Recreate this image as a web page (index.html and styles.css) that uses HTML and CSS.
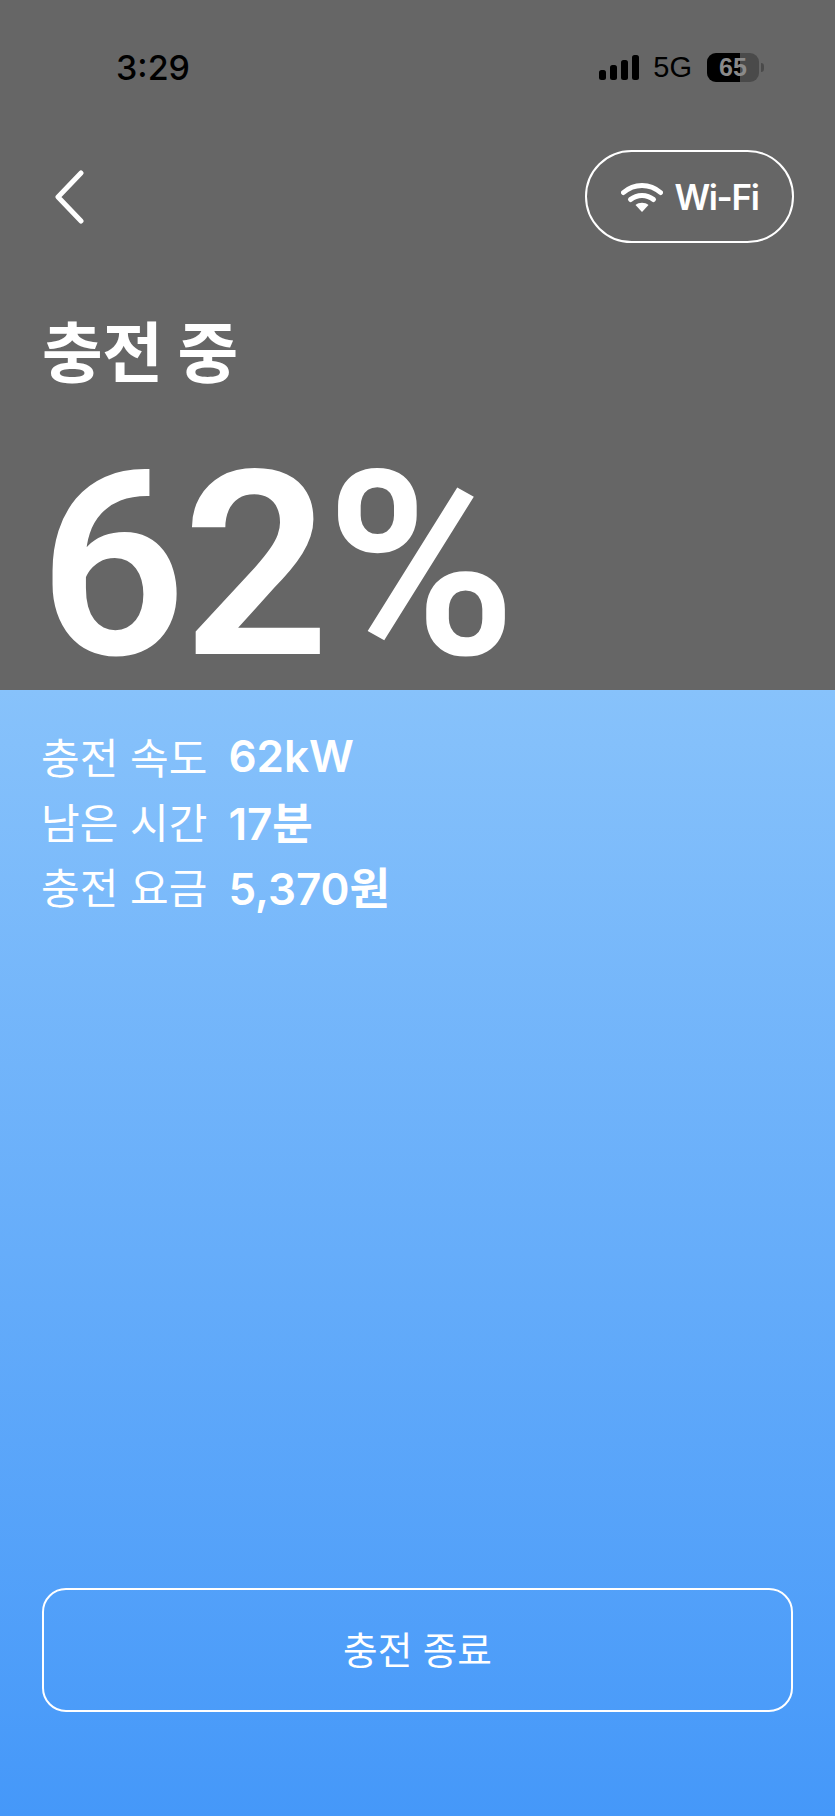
FILE: index.html
```html
<!DOCTYPE html>
<html lang="ko">
<head>
  <meta charset="utf-8">
  <title>충전 중</title>
  <link rel="stylesheet" href="styles.css">
</head>
<body>
  <div id="container">
    <div id="top">
      <div class="status">
        <span class="clock">3:29</span>
        <div class="status-right">
          <svg class="signal" width="40" height="25" viewBox="0 0 40 25">
            <rect x="0" y="15" width="7" height="10" rx="2.5"/>
            <rect x="11" y="10" width="7" height="15" rx="2.5"/>
            <rect x="22" y="5" width="7" height="20" rx="2.5"/>
            <rect x="33" y="0" width="7" height="25" rx="2.5"/>
          </svg>
          <span class="net">5G</span>
          <div class="battery">
            <div class="battery-body">
              <div class="battery-fill"></div>
              <span class="battery-num">65</span>
            </div>
            <div class="battery-nub"></div>
          </div>
        </div>
      </div>
      <div class="nav">
        <svg class="back" width="32" height="54" viewBox="0 0 32 54">
          <path d="M28 3 L5 27 L28 51"/>
        </svg>
        <div class="wifi">
          <svg class="wifi-icon" width="42" height="30" viewBox="0 0 42 30">
            <path class="arc" d="M2.5 10.5 C13 1 29 1 39.5 10.5"/>
            <path class="arc" d="M9.5 17.5 C16 12 26 12 32.5 17.5"/>
            <path class="dot" d="M14.5 23 C18 20 24 20 27.5 23 L21 30 Z"/>
          </svg>
          <span>Wi-Fi</span>
        </div>
      </div>
      <h1>충전 중</h1>
      <div class="percent">62%</div>
    </div>
    <div id="bottom">
      <div class="info">
        <div class="row"><span class="label">충전 속도</span><b>62kW</b></div>
        <div class="row"><span class="label">남은 시간</span><b>17분</b></div>
        <div class="row"><span class="label">충전 요금</span><b>5,370원</b></div>
      </div>
      <div class="stop">충전 종료</div>
    </div>
  </div>
</body>
</html>
```

FILE: styles.css
```css
html, body {
  margin: 0;
  padding: 0;
}

body {
  color: white;
  font-family: Inter, "Noto Sans CJK KR", sans-serif;
}

#container {
  width: 835px;
  height: 1816px;
  display: flex;
  flex-direction: column;
  overflow: hidden;
}

#top {
  height: 690px;
  background-color: #666666;
  padding: 53px 41px 0 42px;
  box-sizing: border-box;
}

.status {
  height: 29px;
  display: flex;
  justify-content: space-between;
  align-items: center;
  color: black;
  padding-left: 74px;
  margin-bottom: 68px;
}

.clock {
  font-size: 34px;
  font-weight: 500;
}

.status-right {
  display: flex;
  align-items: center;
  margin-right: 30px;
}

.signal { fill: black; margin-right: 14px; }

.net {
  font-family: "Liberation Sans", sans-serif;
  font-size: 29px;
  margin-right: 15px;
}

.battery {
  display: flex;
  align-items: center;
}

.battery-body {
  position: relative;
  width: 52px;
  height: 29px;
  border-radius: 9px;
  background-color: #4a4a4a;
  overflow: hidden;
  text-align: center;
}

.battery-fill {
  width: 33px;
  height: 29px;
  background-color: black;
}

.battery-num {
  position: absolute;
  left: 0;
  right: 0;
  top: 0;
  line-height: 29px;
  font-family: "Liberation Sans", sans-serif;
  font-weight: bold;
  font-size: 25px;
  color: #8a8a8a;
}

.battery-nub {
  width: 3px;
  height: 9px;
  margin-left: 2px;
  border-radius: 0 4px 4px 0;
  background-color: #4a4a4a;
}

.nav {
  height: 93px;
  display: flex;
  justify-content: space-between;
  align-items: center;
}

.back {
  margin-left: 11px;
  fill: none;
  stroke: white;
  stroke-width: 5;
  stroke-linecap: round;
  stroke-linejoin: round;
}

.wifi {
  width: 209px;
  height: 93px;
  box-sizing: border-box;
  border: 2px solid white;
  border-radius: 47px;
  display: flex;
  align-items: center;
  justify-content: center;
  gap: 12px;
  font-size: 35px;
  font-weight: 600;
  letter-spacing: -1.4px;
}

.arc {
  fill: none;
  stroke: white;
  stroke-width: 5;
  stroke-linecap: round;
}

.dot { fill: white; }

h1 {
  margin: 74px 0 0 0;
  font-size: 66px;
  line-height: 72px;
  font-weight: 700;
  letter-spacing: -0.5px;
}

.percent {
  margin: 58px 0 0 -3px;
  font-family: Roboto, sans-serif;
  font-size: 258px;
  line-height: 238px;
  font-weight: 600;
  letter-spacing: -4px;
}

#bottom {
  flex: 1;
  background: linear-gradient(#87c2fb, #4598f9);
  padding: 33px 42px 104px 41px;
  display: flex;
  flex-direction: column;
  justify-content: space-between;
}

.row {
  display: flex;
  align-items: center;
  height: 65px;
  font-size: 42px;
  gap: 21px;
}

.label { font-weight: 400; }

.row b {
  font-size: 44px;
  font-weight: 600;
}

.stop {
  height: 124px;
  margin-left: 1px;
  padding-bottom: 6px;
  box-sizing: border-box;
  border: 2px solid white;
  border-radius: 24px;
  display: flex;
  align-items: center;
  justify-content: center;
  font-size: 37.6px;
}
```
